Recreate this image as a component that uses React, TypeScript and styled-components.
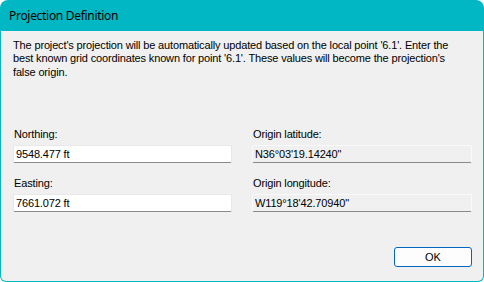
import React from 'react';
import styled, { createGlobalStyle } from 'styled-components';

const GlobalStyle = createGlobalStyle`
  html, body {
    margin: 0;
    padding: 0;
    background: #ffffff;
  }
  * {
    box-sizing: border-box;
  }
`;

const SWindow = styled.div`
  width: 484px;
  height: 282px;
  display: flex;
  flex-direction: column;
  background-color: #00b7c3;
  border-radius: 8px 8px 6px 6px;
  overflow: hidden;
  padding: 0 1px 1px 1px;
`;

const STitleBar = styled.div`
  height: 31px;
  display: flex;
  align-items: center;
  padding-left: 8px;
  font-family: 'Noto Sans', 'Open Sans', sans-serif;
  font-size: 12px;
  letter-spacing: -0.3px;
  color: #000;
`;

const SBody = styled.div`
  flex: 1;
  background-color: #f0f0f0;
  padding: 8px 11px 0 12px;
  font-family: 'Liberation Sans', Arial, sans-serif;
  font-size: 11px;
  line-height: 13px;
  letter-spacing: -0.15px;
  color: #000;
  border-radius: 0 0 5px 5px;
`;

const SDescription = styled.p`
  margin: 0;
  white-space: nowrap;
  line-height: 13.4px;
`;

const SFields = styled.div`
  display: grid;
  grid-template-columns: 219px 220px;
  column-gap: 20px;
  row-gap: 14px;
  margin-top: 49px;
`;

const SField = styled.div`
  display: flex;
  flex-direction: column;
  gap: 4px;
`;

const SLabel = styled.label`
  display: block;
  padding-left: 1px;
`;

const SInputBox = styled.div<{ $readOnly?: boolean }>`
  height: 18px;
  display: flex;
  align-items: center;
  padding-left: 2px;
  background-color: ${(p) => (p.$readOnly ? '#f0f0f0' : '#ffffff')};
  border: 1px solid ${(p) => (p.$readOnly ? '#fafafa' : '#e8e8e8')};
  border-bottom: 1px solid #8a8a8a;
  border-radius: 2px;
  white-space: nowrap;
`;

const SFooter = styled.div`
  display: flex;
  justify-content: flex-end;
  margin-top: 35px;
`;

const SButton = styled.button`
  width: 78px;
  height: 20px;
  font-family: 'Liberation Sans', Arial, sans-serif;
  font-size: 11px;
  color: #000;
  background-color: #fdfdfd;
  border: 1px solid #0067c0;
  border-radius: 3px;
  padding: 0;
`;

const App = () => {
  return (
    <>
      <GlobalStyle />
      <SWindow>
        <STitleBar>Projection Definition</STitleBar>
        <SBody>
          <SDescription>
            The project's projection will be automatically updated based on the local point '6.1'. Enter the
            <br />
            best known grid coordinates known for point '6.1'. These values will become the projection's
            <br />
            false origin.
          </SDescription>
          <SFields>
            <SField>
              <SLabel>Northing:</SLabel>
              <SInputBox>9548.477 ft</SInputBox>
            </SField>
            <SField>
              <SLabel>Origin latitude:</SLabel>
              <SInputBox $readOnly>N36°03'19.14240"</SInputBox>
            </SField>
            <SField>
              <SLabel>Easting:</SLabel>
              <SInputBox>7661.072 ft</SInputBox>
            </SField>
            <SField>
              <SLabel>Origin longitude:</SLabel>
              <SInputBox $readOnly>W119°18'42.70940"</SInputBox>
            </SField>
          </SFields>
          <SFooter>
            <SButton type="button">OK</SButton>
          </SFooter>
        </SBody>
      </SWindow>
    </>
  );
};

export default App;
